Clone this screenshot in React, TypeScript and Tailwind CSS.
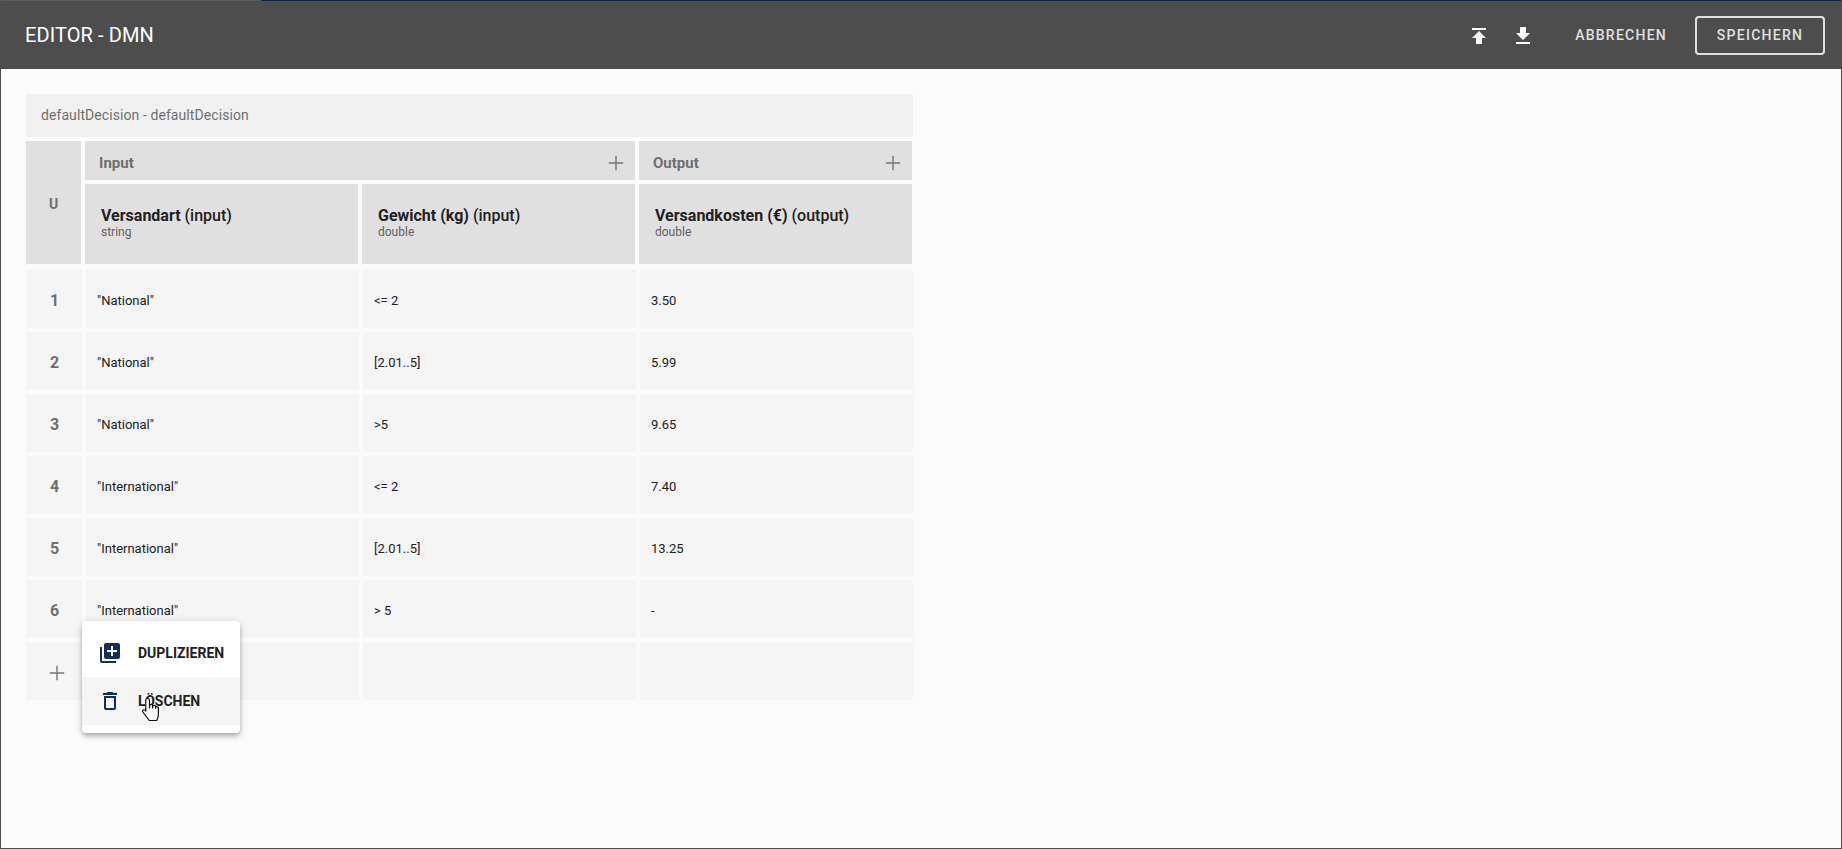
const rows = [
  ['1', '"National"', '<= 2', '3.50'],
  ['2', '"National"', '[2.01..5]', '5.99'],
  ['3', '"National"', '>5', '9.65'],
  ['4', '"International"', '<= 2', '7.40'],
  ['5', '"International"', '[2.01..5]', '13.25'],
  ['6', '"International"', '> 5', '-'],
];

function Plus({ className }: { className: string }) {
  return (
    <svg viewBox="0 0 16 16" className={className} fill="none" stroke="#757575" strokeWidth="1.4">
      <path d="M8 .8v14.4M.8 8h14.4" />
    </svg>
  );
}

function Head({ name, kind, type, pad }: { name: string; kind: string; type: string; pad: string }) {
  return (
    <div className={`bg-[#e0e0e0] h-[80px] flex flex-col justify-center ${pad} pb-[2px]`}>
      <div className="text-[16px] leading-[19px] text-[#212121]">
        <span className="font-bold">{name}</span> <span className="font-medium">({kind})</span>
      </div>
      <div className="text-[12px] leading-[15px] text-[#616161]">{type}</div>
    </div>
  );
}

export default function App() {
  return (
    <div
      className="w-[1842px] h-[849px] bg-[#fbfbfb] overflow-hidden relative border-l border-r border-b border-[#4d4d4d] text-[#212121]"
      style={{ fontFamily: 'Roboto, "Liberation Sans", sans-serif' }}
    >
      <header className="h-[69px] bg-[#4d4d4d] flex items-center justify-between pl-[24px] pr-[16px] border-t border-[#5c5c5c]">
        <div className="text-[20px] text-white font-normal leading-none tracking-[0.1px]">EDITOR - DMN</div>
        <div className="flex items-center">
          <svg viewBox="0 0 24 24" className="w-[24px] h-[24px] fill-white mt-[2px]">
            <path d="M5 4v2h14V4H5zm0 10h4v6h6v-6h4l-7-7-7 7z" />
          </svg>
          <svg viewBox="0 0 24 24" className="w-[24px] h-[24px] fill-white ml-[20px] mt-[2px]">
            <path d="M19 9h-4V3H9v6H5l7 7 7-7zM5 18v2h14v-2H5z" />
          </svg>
          <div className="ml-[40px] text-[14px] font-medium tracking-[1.25px] text-[#e0e0e0]">ABBRECHEN</div>
          <div className="ml-[28px] w-[130px] h-[39px] border-2 border-[#e0e0e0] rounded-[4px] flex items-center justify-center text-[14px] font-medium tracking-[1.25px] text-[#e0e0e0]">
            SPEICHERN
          </div>
        </div>
      </header>

      <main className="pl-[25px] pt-[25px] w-[912px]">
        <div className="h-[43px] bg-[#f1f1f1] flex items-center pl-[15px] text-[14px] tracking-[0.08px] text-[#6f6f6f]">
          defaultDecision - defaultDecision
        </div>

        <div className="mt-[4px] grid grid-cols-[55px_273px_273px_273px] gap-x-[4px] gap-y-[4px] grid-rows-[39px_80px] w-[886px]">
          <div className="row-span-2 bg-[#e0e0e0] flex items-center justify-center pt-[4px] text-[14px] font-bold text-[#6f6f6f]">
            U
          </div>
          <div className="col-span-2 bg-[#e0e0e0] flex items-center justify-between pl-[14px] pr-[11px] text-[15px] font-bold text-[#6f6f6f]">
            <span className="pt-[6px]">Input</span>
            <Plus className="w-[16px] h-[16px] mt-[4px]" />
          </div>
          <div className="bg-[#e0e0e0] flex items-center justify-between pl-[14px] pr-[11px] text-[15px] font-bold text-[#6f6f6f]">
            <span className="pt-[6px]">Output</span>
            <Plus className="w-[16px] h-[16px] mt-[4px]" />
          </div>
          <Head name="Versandart" kind="input" type="string" pad="pl-[16px]" />
          <Head name="Gewicht (kg)" kind="input" type="double" pad="pl-[16px]" />
          <Head name="Versandkosten (€)" kind="output" type="double" pad="pl-[16px]" />
        </div>

        <div className="mt-[6px] flex flex-col gap-[4px]">
          {rows.map((r, i) => (
            <div key={r[0]} className="grid grid-cols-[56px_273px_273px_273px] gap-x-[4px] w-[887px] h-[58px]">
              <div className={`bg-[#f5f5f5] flex items-center justify-center pl-[1px] text-[16px] font-bold text-[#6f6f6f] ${i === 5 ? 'pt-[3px]' : 'pt-[4px]'}`}>
                {r[0]}
              </div>
              {r.slice(1).map((c, j) => (
                <div key={j} className="bg-[#f5f5f5] flex items-center pl-[11px] pt-[4px] text-[13px] text-[#212121]">
                  {c}
                </div>
              ))}
            </div>
          ))}
          <div className="grid grid-cols-[56px_273px_273px_273px] gap-x-[4px] w-[887px] h-[58px]">
            <div className="bg-[#f5f5f5] flex items-center justify-center pl-[6px]">
              <Plus className="w-[16px] h-[16px] mt-[4px]" />
            </div>
            <div className="bg-[#f5f5f5]" />
            <div className="bg-[#f5f5f5]" />
            <div className="bg-[#f5f5f5]" />
          </div>
        </div>
      </main>

      <div className="absolute left-[81px] top-[621px] w-[158px] h-[112px] bg-white rounded-[4px] py-[8px] shadow-[0_2px_4px_-1px_rgba(0,0,0,0.2),0_4px_5px_0_rgba(0,0,0,0.14),0_1px_10px_0_rgba(0,0,0,0.12)]">
        <div className="h-[48px] flex items-center pl-[16px] text-[14px] font-bold text-[#212121]">
          <svg viewBox="0 0 24 24" className="w-[24px] h-[24px] fill-[#12305c] shrink-0 mr-[16px]">
            <path d="M4 6H2v14c0 1.1.9 2 2 2h14v-2H4V6zm16-4H8c-1.1 0-2 .9-2 2v12c0 1.1.9 2 2 2h12c1.1 0 2-.9 2-2V4c0-1.1-.9-2-2-2zm-1 9h-4v4h-2v-4H9V9h4V5h2v4h4v2z" />
          </svg>
          DUPLIZIEREN
        </div>
        <div className="h-[48px] flex items-center pl-[16px] text-[14px] font-bold text-[#212121] bg-[#f5f5f5]">
          <svg viewBox="0 0 24 24" className="w-[24px] h-[24px] fill-[#12305c] shrink-0 mr-[16px]">
            <path d="M6 19c0 1.1.9 2 2 2h8c1.1 0 2-.9 2-2V7H6v12zM8 9h8v10H8V9zm7.5-5l-1-1h-5l-1 1H5v2h14V4z" />
          </svg>
          LÖSCHEN
        </div>
      </div>

      <svg viewBox="0 0 20 26" preserveAspectRatio="none" className="absolute left-[140px] top-[697px] w-[22px] h-[26px]">
        <path
          d="M6 1.5c1 0 1.7.7 1.7 1.7V11l.3-3c.8-.8 2-.8 2.5 0v3l.3-2.2c.8-.7 2-.6 2.5.2v2.5l.3-1.5c.8-.6 1.9-.4 2.2.5v7c0 2.5-.6 4-1.5 6H7.5L1.7 15c-.7-1 0-2.2 1-2.2.7 0 1.4.7 1.6 1.4V3.2c0-1 .7-1.7 1.7-1.7z"
          fill="#fff"
          stroke="#111"
          strokeWidth="1.1"
          strokeLinejoin="round"
        />
      </svg>

      <div className="absolute left-[260px] right-0 top-0 h-[1px] bg-[#0d2540]" />
    </div>
  );
}
